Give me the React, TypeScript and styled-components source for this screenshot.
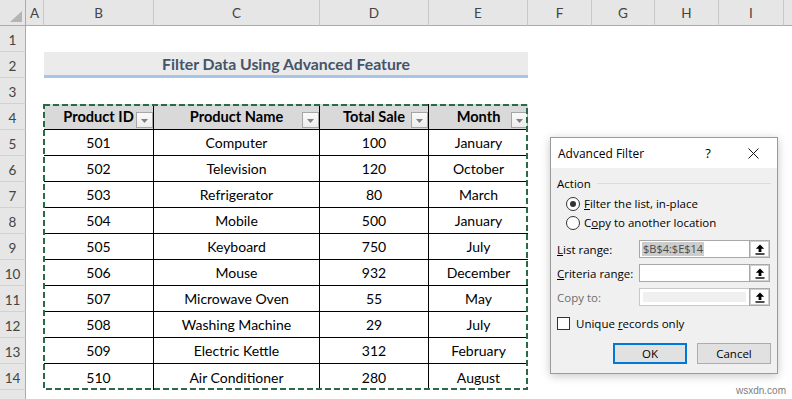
import React from 'react';
import styled, { createGlobalStyle } from 'styled-components';

const GlobalStyle = createGlobalStyle`
  html, body { margin: 0; padding: 0; background: #fff; }
  body { width: 792px; height: 399px; overflow: hidden; }
  * { box-sizing: border-box; }
`;

const SHEET_FONT = `"Lato", "Open Sans", sans-serif`;
const UI_FONT = `"Open Sans", "Noto Sans", sans-serif`;

const Sheet = styled.div`
  position: relative;
  width: 792px;
  height: 399px;
  overflow: hidden;
  display: grid;
  grid-template-columns: 26px 18px 110px 166px 109px 99px 64px 63px 64px 65px 64px;
  grid-template-rows: 26px repeat(15, 26px);
  font-family: ${SHEET_FONT};
  background: #fff;
`;

const Corner = styled.div`
  grid-row: 1;
  grid-column: 1;
  background: #e6e6e6;
  border-right: 1px solid #ababab;
  border-bottom: 1px solid #ababab;
  display: flex;
  align-items: flex-end;
  justify-content: flex-end;
  padding: 0 3px 3px 0;
`;

const CornerTriangle = styled.div`
  width: 0;
  height: 0;
  border-left: 12px solid transparent;
  border-bottom: 11px solid #b4b4b4;
`;

const ColHeader = styled.div<{ $col: number }>`
  grid-row: 1;
  grid-column: ${(p) => p.$col};
  background: #e6e6e6;
  border-right: 1px solid #c8c8c8;
  border-bottom: 1px solid #ababab;
  color: #444;
  font-size: 13.5px;
  display: flex;
  align-items: center;
  justify-content: center;
  padding-top: 1px;
`;

const RowHeader = styled.div<{ $row: number }>`
  grid-column: 1;
  grid-row: ${(p) => p.$row};
  background: #e6e6e6;
  border-right: 1px solid #ababab;
  border-bottom: 1px solid #d2d2d2;
  color: #444;
  font-size: 13.5px;
  display: flex;
  align-items: center;
  justify-content: center;
  padding-top: 2px;
`;

const Title = styled.div`
  grid-column: 3 / 7;
  grid-row: 3;
  background: #ebebeb;
  border-bottom: 3px solid #a9c4e4;
  color: #44546a;
  font-weight: 700;
  font-size: 15.8px;
  display: flex;
  align-items: center;
  justify-content: center;
  padding-bottom: 1px;
`;

const Table = styled.div`
  grid-column: 3 / 7;
  grid-row: 5 / 16;
  position: relative;
  display: grid;
  grid-template-columns: 110px 166px 109px 99px;
  grid-template-rows: repeat(11, 26px);
`;

const Cell = styled.div<{ $head?: boolean; $lastCol?: boolean; $lastRow?: boolean }>`
  border-right: ${(p) => (p.$lastCol ? 'none' : '1px solid #000')};
  border-bottom: ${(p) => (p.$lastRow ? 'none' : '1px solid #000')};
  background: ${(p) => (p.$head ? '#d9d9d9' : '#fff')};
  font-weight: ${(p) => (p.$head ? 700 : 400)};
  font-size: ${(p) => (p.$head ? '14.6px' : '14px')};
  color: #000;
  position: relative;
  display: flex;
  align-items: center;
  justify-content: center;
`;

const FilterButton = styled.div`
  position: absolute;
  right: 0;
  top: 8px;
  width: 17px;
  height: 16px;
  border: 1px solid #a6a6a6;
  background: linear-gradient(#fafafa, #ececec);
  display: flex;
  align-items: center;
  justify-content: center;
  padding-top: 2px;
`;

const Marquee = styled.svg`
  position: absolute;
  left: -1px;
  top: 0;
  width: 485px;
  height: 286px;
  pointer-events: none;
  overflow: visible;
`;

const Watermark = styled.div`
  position: absolute;
  right: 6px;
  bottom: 3px;
  font-family: "Liberation Sans", Arial, sans-serif;
  font-size: 10px;
  color: #7d7d7d;
`;

/* ---------------- dialog ---------------- */

const Window = styled.div`
  position: absolute;
  left: 550px;
  top: 137px;
  width: 228px;
  height: 237px;
  border: 1px solid #9a9a9a;
  box-shadow: 0 2px 9px rgba(0, 0, 0, 0.22);
  background: #f0f0f0;
  font-family: ${UI_FONT};
  font-size: 11.5px;
  color: #000;
  display: flex;
  flex-direction: column;
`;

const TitleBar = styled.div`
  height: 30px;
  background: #fff;
  display: flex;
  align-items: center;
  padding-left: 7px;
`;

const TitleText = styled.div`
  flex: 1;
  font-size: 12px;
`;

const TitleBtn = styled.div<{ $w: number }>`
  width: ${(p) => p.$w}px;
  height: 100%;
  display: flex;
  align-items: center;
  justify-content: center;
  font-size: 13px;
`;

const Body = styled.div`
  flex: 1;
  display: flex;
  flex-direction: column;
  padding: 7px 6px 0 6px;
`;

const Legend = styled.div`
  height: 16px;
  display: flex;
  align-items: center;
  color: #000;
`;

const LegendLine = styled.div`
  flex: 1;
  height: 1px;
  background: #dcdcdc;
  margin-left: 6px;
`;

const RadioRow = styled.div<{ $mt?: number }>`
  height: 19px;
  margin-top: ${(p) => p.$mt ?? 0}px;
  display: flex;
  align-items: center;
  padding-left: 9px;
  gap: 4px;
`;

const RadioCircle = styled.div<{ $on?: boolean }>`
  width: 14px;
  height: 14px;
  border-radius: 50%;
  border: 1px solid #333;
  background: #fff;
  display: flex;
  align-items: center;
  justify-content: center;
  &::after {
    content: '';
    display: ${(p) => (p.$on ? 'block' : 'none')};
    width: 6px;
    height: 6px;
    border-radius: 50%;
    background: #333;
  }
`;

const U = styled.span`
  text-decoration: underline;
  text-underline-offset: 1px;
`;

const FieldRow = styled.div<{ $mt: number }>`
  height: 18px;
  margin-top: ${(p) => p.$mt}px;
  display: flex;
  align-items: center;
`;

const FieldLabel = styled.div<{ $disabled?: boolean }>`
  width: 82px;
  color: ${(p) => (p.$disabled ? '#6d6d6d' : '#000')};
`;

const FieldInput = styled.div<{ $disabled?: boolean }>`
  width: 110px;
  height: 18px;
  border: 1px solid ${(p) => (p.$disabled ? '#c8c8c8' : '#a8a8a8')};
  background: ${(p) => (p.$disabled ? '#f0f0f0' : '#fff')};
  box-shadow: ${(p) => (p.$disabled ? 'inset 0 0 0 3px #fff' : 'none')};
  border-right: none;
  display: flex;
  align-items: center;
  padding-left: 2px;
  font-size: 11px;
`;

const Selected = styled.span`
  background: #cccccc;
  color: #4a4a4a;
  padding: 0 1px;
  line-height: 14px;
`;

const RangeButton = styled.div`
  width: 21px;
  height: 18px;
  border: 1px solid #a8a8a8;
  box-shadow: inset 0 0 0 1px #d0d0d0;
  background: #fff;
  display: flex;
  align-items: center;
  justify-content: center;
`;

const CheckRow = styled.div`
  height: 18px;
  margin-top: 8px;
  display: flex;
  align-items: center;
  gap: 6px;
`;

const CheckBox = styled.div`
  width: 13px;
  height: 13px;
  border: 1px solid #333;
  background: #fff;
`;

const ButtonRow = styled.div`
  margin-top: 11px;
  display: flex;
  justify-content: flex-end;
  gap: 10px;
`;

const DlgButton = styled.div<{ $primary?: boolean }>`
  width: 74px;
  height: 21px;
  background: #e1e1e1;
  border: 1px solid ${(p) => (p.$primary ? '#0078d7' : '#adadad')};
  box-shadow: ${(p) => (p.$primary ? 'inset 0 0 0 1px #0078d7' : 'none')};
  display: flex;
  align-items: center;
  justify-content: center;
  font-size: 11.5px;
`;

const UpArrow = () => (
  <svg width="10" height="11" viewBox="0 0 10 11">
    <path d="M5 0.5 L9.2 4.8 H6.4 V8 H3.6 V4.8 H0.8 Z" fill="#000" />
    <rect x="0.5" y="9.3" width="9" height="1.4" fill="#000" />
  </svg>
);

const CloseIcon = () => (
  <svg width="11" height="11" viewBox="0 0 11 11">
    <path d="M0.5 0.5 L10.5 10.5 M10.5 0.5 L0.5 10.5" stroke="#111" strokeWidth="1" />
  </svg>
);

const DropArrow = () => (
  <svg width="7" height="4" viewBox="0 0 7 4">
    <path d="M0 0 H7 L3.5 4 Z" fill="#808080" />
  </svg>
);

const cols = ['A', 'B', 'C', 'D', 'E', 'F', 'G', 'H', 'I', ''];
const headers = ['Product ID', 'Product Name', 'Total Sale', 'Month'];
const rows: [string, string, string, string][] = [
  ['501', 'Computer', '100', 'January'],
  ['502', 'Television', '120', 'October'],
  ['503', 'Refrigerator', '80', 'March'],
  ['504', 'Mobile', '500', 'January'],
  ['505', 'Keyboard', '750', 'July'],
  ['506', 'Mouse', '932', 'December'],
  ['507', 'Microwave Oven', '55', 'May'],
  ['508', 'Washing Machine', '29', 'July'],
  ['509', 'Electric Kettle', '312', 'February'],
  ['510', 'Air Conditioner', '280', 'August'],
];

export default function App() {
  return (
    <>
      <GlobalStyle />
      <Sheet>
        <Corner>
          <CornerTriangle />
        </Corner>
        {cols.map((c, i) => (
          <ColHeader key={i} $col={i + 2}>
            {c}
          </ColHeader>
        ))}
        {Array.from({ length: 15 }, (_, i) => (
          <RowHeader key={i} $row={i + 2}>
            {i < 14 ? i + 1 : ''}
          </RowHeader>
        ))}

        <Title>Filter Data Using Advanced Feature</Title>

        <Table>
          {headers.map((h, ci) => (
            <Cell key={h} $head $lastCol={ci === 3}>
              {h}
              <FilterButton>
                <DropArrow />
              </FilterButton>
            </Cell>
          ))}
          {rows.map((r, ri) =>
            r.map((v, ci) => (
              <Cell key={`${ri}-${ci}`} $lastCol={ci === 3} $lastRow={ri === rows.length - 1}>
                {v}
              </Cell>
            ))
          )}
          <Marquee viewBox="0 0 485 286">
            <rect
              x="1"
              y="1"
              width="483"
              height="284"
              fill="none"
              stroke="#2b6a48"
              strokeWidth="2"
              strokeDasharray="6 3"
            />
          </Marquee>
        </Table>

        <Window>
          <TitleBar>
            <TitleText>Advanced Filter</TitleText>
            <TitleBtn $w={44}>?</TitleBtn>
            <TitleBtn $w={47}>
              <CloseIcon />
            </TitleBtn>
          </TitleBar>
          <Body>
            <Legend>
              Action
              <LegendLine />
            </Legend>
            <RadioRow $mt={3}>
              <RadioCircle $on />
              <span>
                <U>F</U>ilter the list, in-place
              </span>
            </RadioRow>
            <RadioRow>
              <RadioCircle />
              <span>
                C<U>o</U>py to another location
              </span>
            </RadioRow>
            <FieldRow $mt={8}>
              <FieldLabel>
                <U>L</U>ist range:
              </FieldLabel>
              <FieldInput>
                <Selected>$B$4:$E$14</Selected>
              </FieldInput>
              <RangeButton>
                <UpArrow />
              </RangeButton>
            </FieldRow>
            <FieldRow $mt={6}>
              <FieldLabel>
                <U>C</U>riteria range:
              </FieldLabel>
              <FieldInput />
              <RangeButton>
                <UpArrow />
              </RangeButton>
            </FieldRow>
            <FieldRow $mt={6}>
              <FieldLabel $disabled>Copy to:</FieldLabel>
              <FieldInput $disabled />
              <RangeButton>
                <UpArrow />
              </RangeButton>
            </FieldRow>
            <CheckRow>
              <CheckBox />
              <span>
                Unique <U>r</U>ecords only
              </span>
            </CheckRow>
            <ButtonRow>
              <DlgButton $primary>OK</DlgButton>
              <DlgButton>Cancel</DlgButton>
            </ButtonRow>
          </Body>
        </Window>

        <Watermark>wsxdn.com</Watermark>
      </Sheet>
    </>
  );
}
